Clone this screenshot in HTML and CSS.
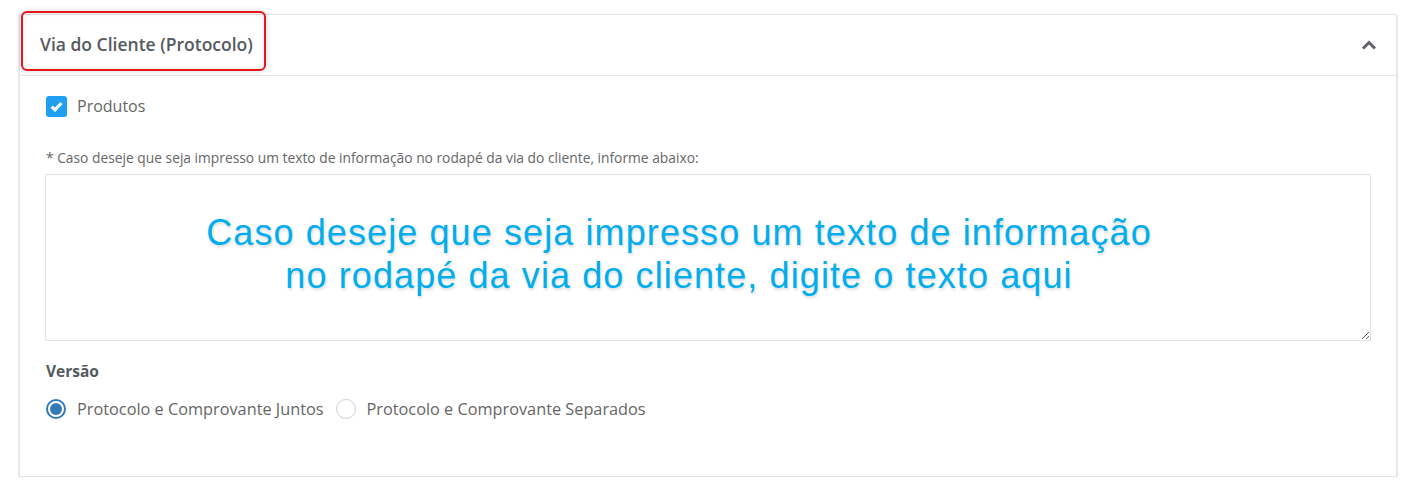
FILE: index.html
```html
<!DOCTYPE html>
<html>
<head>
<meta charset="utf-8">
<link rel="stylesheet" href="styles.css">
</head>
<body>
<div class="card">
  <div class="card-header">
    <span class="title">Via do Cliente (Protocolo)</span>
    <svg class="chevron" width="16" height="10" viewBox="0 0 16 10"><path d="M2 8.5 L8 2.5 L14 8.5" fill="none" stroke="#5f6368" stroke-width="3"/></svg>
    <div class="highlight"></div>
  </div>
  <div class="card-body">
    <label class="check-row">
      <span class="checkbox"><svg width="13" height="11" viewBox="0 0 13 11"><path d="M1.6 5.6 L5 8.8 L11.4 2" fill="none" stroke="#fff" stroke-width="3.2"/></svg></span>
      <span class="check-label">Produtos</span>
    </label>
    <div class="hint">* Caso deseje que seja impresso um texto de informação no rodapé da via do cliente, informe abaixo:</div>
    <div class="area-wrap">
      <textarea class="area"></textarea>
      <div class="annotation">Caso deseje que seja impresso um texto de informação<br>no rodapé da via do cliente, digite o texto aqui</div>
    </div>
    <div class="section-label">Versão</div>
    <div class="radios">
      <label class="radio-row"><span class="radio checked"></span><span class="radio-label">Protocolo e Comprovante Juntos</span></label>
      <label class="radio-row"><span class="radio"></span><span class="radio-label">Protocolo e Comprovante Separados</span></label>
    </div>
  </div>
</div>
</body>
</html>
```
FILE: styles.css
```css
html, body { margin: 0; padding: 0; background: #fff; }
body { font-family: "Open Sans", "Noto Sans", sans-serif; color: #666; }
.card {
  margin: 14px 0 0 19px;
  width: 1378px;
  height: 463px;
  box-sizing: border-box;
  border: 1px solid #e4e4e4;
  box-shadow: 0 1px 2px rgba(0,0,0,0.22);
  background: #fff;
}
.card-header {
  position: relative;
  height: 60px;
  border-bottom: 1px solid #e6e6e6;
  display: flex;
  align-items: center;
  justify-content: space-between;
  padding: 0 19px 0 20px;
}
.title { font-size: 17.5px; font-weight: 600; color: #555a60; margin-top: -3px; }
.chevron { margin-top: 0; }
.highlight {
  position: absolute;
  left: 1px; top: -4px;
  width: 241px; height: 56px;
  border: 2px solid #e8141b;
  border-radius: 6px;
  box-shadow: 0 0 6px rgba(0,0,0,0.15), inset 0 0 5px rgba(0,0,0,0.1);
}
.card-body { padding: 19px 26px 0 26px; }
.check-row { display: flex; align-items: center; gap: 10px; height: 22px; }
.checkbox {
  width: 21px; height: 21px; border-radius: 3px; background: #1e9ff2;
  display: flex; align-items: center; justify-content: center;
}
.check-label { font-size: 16px; color: #666; }
.hint { margin-top: 32px; font-size: 13.8px; line-height: 18px; color: #666; }
.area-wrap { position: relative; margin-top: 7px; margin-left: -1px; }
.area {
  display: block; width: 1326px; height: 167px; box-sizing: border-box;
  border: 1px solid #e2e2e2; border-radius: 1px; resize: vertical; margin: 0;
}
.annotation {
  position: absolute; left: 0; top: 37px; width: 1268px; text-align: center;
  font-family: "Liberation Sans", Arial, sans-serif; font-size: 36px; line-height: 43px;
  letter-spacing: 1.1px;
  color: #00aeef; text-shadow: 1px 2px 3px rgba(0,0,0,0.15);
}
.section-label { margin-top: 20px; font-size: 15.5px; font-weight: 700; color: #555a60; line-height: 20px; }
.radios { display: flex; gap: 12px; margin-top: 17px; }
.radio-row { display: flex; align-items: center; gap: 11px; }
.radio {
  width: 20px; height: 20px; border-radius: 50%; box-sizing: border-box;
  border: 1px solid #cfcfcf; background: #fff; position: relative;
}
.radio.checked { border: 2px solid #337ab7; }
.radio.checked::after {
  content: ""; position: absolute; left: 2px; top: 2px; width: 12px; height: 12px;
  border-radius: 50%; background: #337ab7;
}
.radio-label { font-size: 16.3px; color: #666; line-height: 22px; }
```
